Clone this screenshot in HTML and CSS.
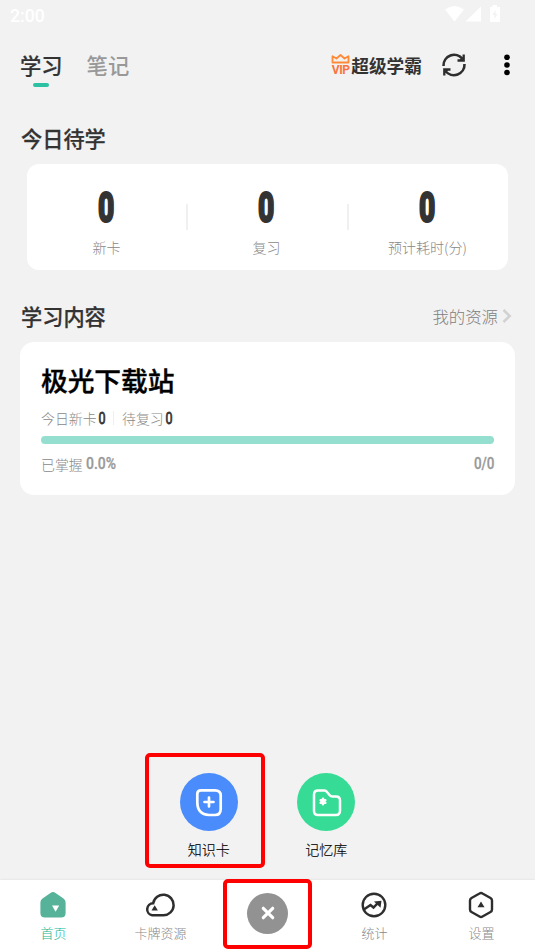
FILE: index.html
```html
<!DOCTYPE html>
<html lang="zh-CN">
<head>
<meta charset="utf-8">
<title>学习</title>
<link rel="stylesheet" href="styles.css">
</head>
<body>
<div class="app">
  <div class="status">
    <span class="clock">2:00</span>
    <svg class="status-icons" width="56" height="20" viewBox="0 0 56 20" fill="#fff">
      <path d="M0 4.500Q9.500-2.500 19 4.500L9.500 16.500Z"/>
      <path d="M20.500 16.500L36 1.500V16.500Z"/>
      <path fill-rule="evenodd" d="M47.500 0h4.500v2h3v14a1 1 0 0 1-1 1h-8a1 1 0 0 1-1-1V2h2.500ZM50.500 5l-3 5h2v4l3-5h-2Z"/>
    </svg>
  </div>
  <header class="header">
    <div class="tab active">学习<i class="underline"></i></div>
    <div class="tab">笔记</div>
    <div class="vip">
      <span class="vip-badge">
        <svg width="19" height="10" viewBox="0 0 19 10" fill="none" stroke="#ff8a35" stroke-width="1.800" stroke-linejoin="round"><path d="M1.500 8.500V2.200L5.500 4.500L9.500 1L13.500 4.500L17.500 2.200V8.500Z"/></svg>
        <b>VIP</b>
      </span>
      <span class="vip-name">超级学霸</span>
    </div>
    <svg class="refresh" width="26" height="26" viewBox="0 0 26 26" fill="none" stroke="#2e2e2e" stroke-width="2.600">
      <path d="M2.500 14A10.600 10.600 0 0 1 21.500 7M23.500 12A10.600 10.600 0 0 1 4.500 19"/>
      <path stroke-width="2.300" d="M22.700 2.500V8.500H16.500M3.300 23.500V17.500H9.500"/>
      <path d="M22.700 4V8.500H18ZM3.300 22V17.500H8Z" fill="#2e2e2e" stroke="none"/>
    </svg>
    <svg class="more" width="6" height="22" viewBox="0 0 6 22"><circle cx="3" cy="3.300" r="2.800"/><circle cx="3" cy="11" r="2.800"/><circle cx="3" cy="18.500" r="2.800"/></svg>
  </header>

  <h2 class="heading today">今日待学</h2>
  <section class="stats">
    <div class="stat"><b>0</b><span>新卡</span></div>
    <div class="stat"><b>0</b><span>复习</span></div>
    <div class="stat"><b>0</b><span>预计耗时(分)</span></div>
  </section>

  <div class="content-head">
    <h2 class="heading">学习内容</h2>
    <span class="resources">我的资源</span>
    <svg width="10" height="16" viewBox="0 0 10 16" fill="none" stroke="#d2d2d2" stroke-width="2.500"><path d="M1.500 2L7.700 8L1.500 14"/></svg>
  </div>
  <section class="deck">
    <h1>极光下载站</h1>
    <div class="counts"><span>今日新卡</span><b>0</b><i></i><span>待复习</span><b>0</b></div>
    <div class="progress"></div>
    <div class="mastery"><span>已掌握</span><em class="percent">0.0%</em><em class="ratio">0/0</em></div>
  </section>

  <div class="actions">
    <div class="action">
      <div class="disc blue">
        <svg width="30" height="30" viewBox="0 0 30 30" fill="none" stroke="#fff" stroke-width="2.700" stroke-linecap="round">
          <path d="M7 3.300H21Q26.700 3.300 26.700 8.500V22Q26.700 28 21 28H15Q3.300 27.500 3.300 15V7Q3.300 3.300 7 3.300Z"/><path d="M15 10.500V19.500M10.500 15H19.500"/>
        </svg>
      </div>
      <span>知识卡</span>
      <i class="mark card-mark"></i>
    </div>
    <div class="action">
      <div class="disc green">
        <svg width="32" height="30" viewBox="0 0 32 30" fill="none" stroke="#fff" stroke-width="2.500" stroke-linecap="round" stroke-linejoin="round">
          <path d="M8 3.500H14.500Q16 3.500 17 5L19.500 8Q20.800 9.500 22.500 9.500H26Q30 9.500 30 13.500V23.500Q30 28 26 28H8Q4 28 4 24V7.500Q4 3.500 8 3.500Z"/>
          <path d="M13 11.800V17.200M10.700 13.200L15.300 15.800M15.300 13.200L10.700 15.800"/>
        </svg>
      </div>
      <span>记忆库</span>
    </div>
  </div>

  <nav class="nav">
    <div class="item current">
      <svg width="28" height="28" viewBox="0 0 28 28"><path fill="#56b298" d="M11.500 2Q14 .2 16.500 2L24.500 7.600Q26.600 9.200 26.600 11.500V22Q26.600 26.500 22 26.500H6Q1.400 26.500 1.400 22V11.500Q1.400 9.200 3.500 7.600Z"/><path fill="#fff" d="M13 14.500h7.200l-3.600 6.200Z"/></svg>
      <span>首页</span>
    </div>
    <div class="item">
      <svg width="32" height="28" viewBox="0 0 32 28"><path fill="none" stroke="#2e2e2e" stroke-width="2.500" d="M8.200 24.300H19.500A10.300 10.300 0 1 0 9.200 12.200A6.100 6.100 0 0 0 8.200 24.300Z"/><path fill="#2e2e2e" d="M10.700 14.200l3.200 5.300h-6.400Z"/></svg>
      <span>卡牌资源</span>
    </div>
    <div class="item close">
      <div class="close-button"><svg width="16" height="16" viewBox="0 0 16 16" stroke="#fff" stroke-width="3.200" stroke-linecap="round"><path d="M3.300 3.300L12.700 12.700M12.700 3.300L3.300 12.700"/></svg></div>
      <i class="mark close-mark"></i>
    </div>
    <div class="item">
      <svg width="28" height="28" viewBox="0 0 28 28" fill="none" stroke="#2e2e2e" stroke-width="2.400"><circle cx="14" cy="14" r="11.300"/><path d="M3.500 18.800L10.500 14L13.500 16.500L18 11.800"/><path fill="#2e2e2e" stroke="none" d="M14 10.500L21.500 9.800L20.500 16.800Z"/></svg>
      <span>统计</span>
    </div>
    <div class="item">
      <svg width="28" height="28" viewBox="0 0 28 28"><path fill="none" stroke="#2e2e2e" stroke-width="2.400" stroke-linejoin="round" d="M12.500 2.500Q14 1.600 15.500 2.500L23.500 7Q25 8 25 9.500V18.500Q25 20.200 23.500 21L15.500 25.500Q14 26.400 12.500 25.500L4.500 21Q3 20.200 3 18.500V9.500Q3 8 4.500 7Z"/><path fill="#2e2e2e" d="M14 10.500l3.500 5.800h-7Z"/></svg>
      <span>设置</span>
    </div>
  </nav>
</div>
</body>
</html>
```

FILE: styles.css
```css
* { box-sizing: border-box; }
body { margin: 0; background: #f2f2f2; font-family: "Noto Sans CJK SC", sans-serif; color: #333; }
h1, h2 { margin: 0; }
b, em, .clock { font-family: Roboto, "Noto Sans", sans-serif; font-style: normal; }
svg { display: block; flex: none; }
.app { width: 535px; height: 951px; display: flex; flex-direction: column; overflow: hidden; }

.status { height: 32px; padding: 0 34px 0 10px; display: flex; justify-content: space-between; align-items: center; }
.clock { color: #fff; font-size: 17.7px; font-weight: 500; line-height: 32px; }
.status-icons { margin-top: -3px; }

.header { height: 66px; padding: 0 25px 0 20px; display: flex; align-items: center; }
.tab { position: relative; font-size: 21.3px; line-height: 30px; font-weight: 500; color: #999; margin-right: 24px; }
.tab.active { color: #333; -webkit-text-stroke: .2px; }
.underline { position: absolute; left: 13px; top: 33px; width: 16px; height: 4px; border-radius: 2px; background: #2bc1a2; }
.vip { margin-left: auto; display: flex; align-items: center; gap: 1px; }
.vip-badge { width: 19px; display: flex; flex-direction: column; align-items: center; }
.vip-badge b { font-size: 12px; line-height: 12px; font-weight: 700; color: #fa7440; letter-spacing: -0.4px; transform: scaleY(1.08); }
.vip-name { font-size: 17.7px; line-height: 26px; font-weight: 700; }
.refresh { margin: 0 37px 0 19px; }

.heading { font-size: 21.2px; line-height: 30px; font-weight: 500; -webkit-text-stroke: .25px; }
.today { margin: 25px 0 11px 21px; }
.stats { width: 481px; height: 106px; margin-left: 27px; border-radius: 12px; background: #fff; display: grid; grid-template-columns: 159px 161px 161px; }
.stat { display: flex; flex-direction: column; align-items: center; }
.stat + .stat { background: linear-gradient(#f0f0f0, #f0f0f0) no-repeat 0 40px / 2px 26px; }
.stat b { margin-top: 22px; font-size: 42px; line-height: 44px; font-weight: 900; transform: scaleX(.67); -webkit-text-stroke: 2px #333; }
.stat span { margin-top: 7px; font-size: 14px; line-height: 20px; font-weight: 300; color: #888; }

.content-head { height: 30px; margin: 31px 23px 11px 21px; display: flex; align-items: center; }
.resources { margin: -1px 4px 0 auto; font-size: 16.400px; line-height: 24px; font-weight: 300; color: #808080; }
.deck { width: 495px; height: 153px; margin-left: 20px; padding: 19px 21px; border-radius: 14px; background: #fff; }
.deck h1 { font-size: 26.700px; line-height: 38px; font-weight: 500; color: #000; -webkit-text-stroke: .4px #000; }
.counts, .mastery { display: flex; align-items: center; font-size: 13.900px; line-height: 20px; font-weight: 300; color: #888; }
.counts { margin-top: 9px; }
.counts b { width: 10px; margin-top: 2px; text-align: center; font-size: 16.500px; line-height: 18px; color: #333; transform: scaleX(.76); -webkit-text-stroke: .8px #333; }
.counts i { width: 1.500px; height: 14px; margin: 0 8px 0 6px; background: #eee; }
.progress { height: 8px; margin-top: 8px; border-radius: 4px; background: #94dfcf; }
.mastery { margin-top: 10px; }
.mastery span { margin-top: -1px; }
.mastery em { font-size: 16px; font-weight: 500; color: #999; -webkit-text-stroke: .3px #999; }
.percent { margin-left: 3px; transform: scaleX(.87); transform-origin: left; }
.ratio { margin-left: auto; transform: scaleX(.84); transform-origin: right; }

.actions { margin-top: auto; padding-left: 150px; display: flex; height: 107px; }
.action { position: relative; width: 117.500px; display: flex; flex-direction: column; align-items: center; font-size: 14px; line-height: 20px; font-weight: 300; }
.action > span { margin-top: 8px; color: #000; -webkit-text-stroke: .15px; }
.disc { width: 58px; height: 58px; border-radius: 50%; display: grid; place-items: center; }
.blue { background: #4a8cfb; }
.green { background: #36db95; }
.mark { position: absolute; border: 4px solid #f00; border-radius: 5px; }
.card-mark { left: -5px; top: -20px; width: 120px; height: 115px; }

.nav { height: 71px; background: #fff; display: flex; box-shadow: 0 -1px 2px #0000000c; }
.item { position: relative; flex: 1; display: flex; flex-direction: column; align-items: center; padding-top: 11px; font-size: 13px; line-height: 20px; font-weight: 300; color: #888; }
.item > span { margin-top: 4px; }
.item > svg { margin-left: -1px; }
.current { color: #12b795; }
.close { padding-top: 12.500px; }
.close-button { width: 41px; height: 41px; border-radius: 50%; background: #929292; display: grid; place-items: center; }
.close-mark { left: 9px; top: -1px; width: 89px; height: 70px; }
```
